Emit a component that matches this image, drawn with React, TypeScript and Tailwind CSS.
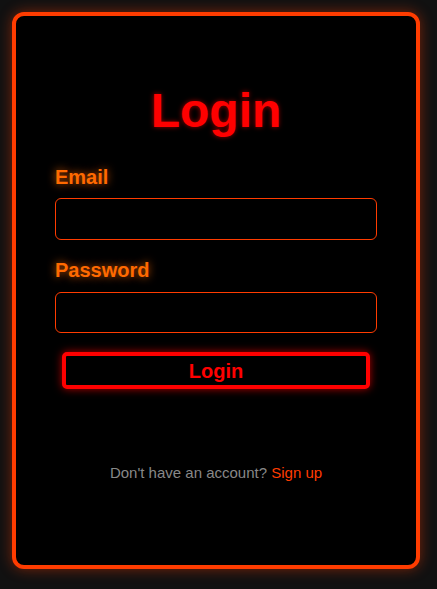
import React from "react";

export default function App() {
  return (
    <div
      className="min-h-[589px] w-full bg-[#111111] pt-[12px] pl-[12px]"
      style={{ fontFamily: '"Liberation Sans", Arial, sans-serif' }}
    >
      <div className="flex h-[557px] w-[408px] flex-col items-center rounded-[12px] border-4 border-[#ff3c00] bg-black shadow-[0_0_14px_rgba(255,60,0,0.45)]">
        <h1 className="mt-[71px] text-[48px] font-bold leading-none text-[#ff0000] [text-shadow:0_0_5px_rgba(255,0,0,0.6)]">
          Login
        </h1>
        <div className="mt-[32px] flex w-[322px] flex-col">
          <label className="h-[20px] text-[20px] font-bold leading-none text-[#ff6a00] [text-shadow:0_0_8px_rgba(255,106,0,0.8)]">
            Email
          </label>
          <input
            type="email"
            className="mt-[11px] h-[42px] w-[322px] rounded-[6px] border border-[#ff3c00] bg-black px-3 text-white outline-none"
          />
          <label className="mt-[20px] h-[20px] text-[20px] font-bold leading-none text-[#ff6a00] [text-shadow:0_0_8px_rgba(255,106,0,0.8)]">
            Password
          </label>
          <input
            type="password"
            className="mt-[12px] h-[41px] w-[322px] rounded-[6px] border border-[#ff3c00] bg-black px-3 text-white outline-none"
          />
          <button className="mx-auto mt-[19px] flex h-[37px] w-[308px] items-center justify-center rounded-[5px] border-4 border-[#ff0000] bg-black text-[20px] font-bold leading-none text-[#ff0000] shadow-[0_0_8px_rgba(255,0,0,0.7)]">
            Login
          </button>
        </div>
        <p className="mt-[76px] text-[15px] leading-none text-[#888888]">
          Don't have an account?{" "}
          <span className="text-[#ff3c00]">Sign up</span>
        </p>
      </div>
    </div>
  );
}
